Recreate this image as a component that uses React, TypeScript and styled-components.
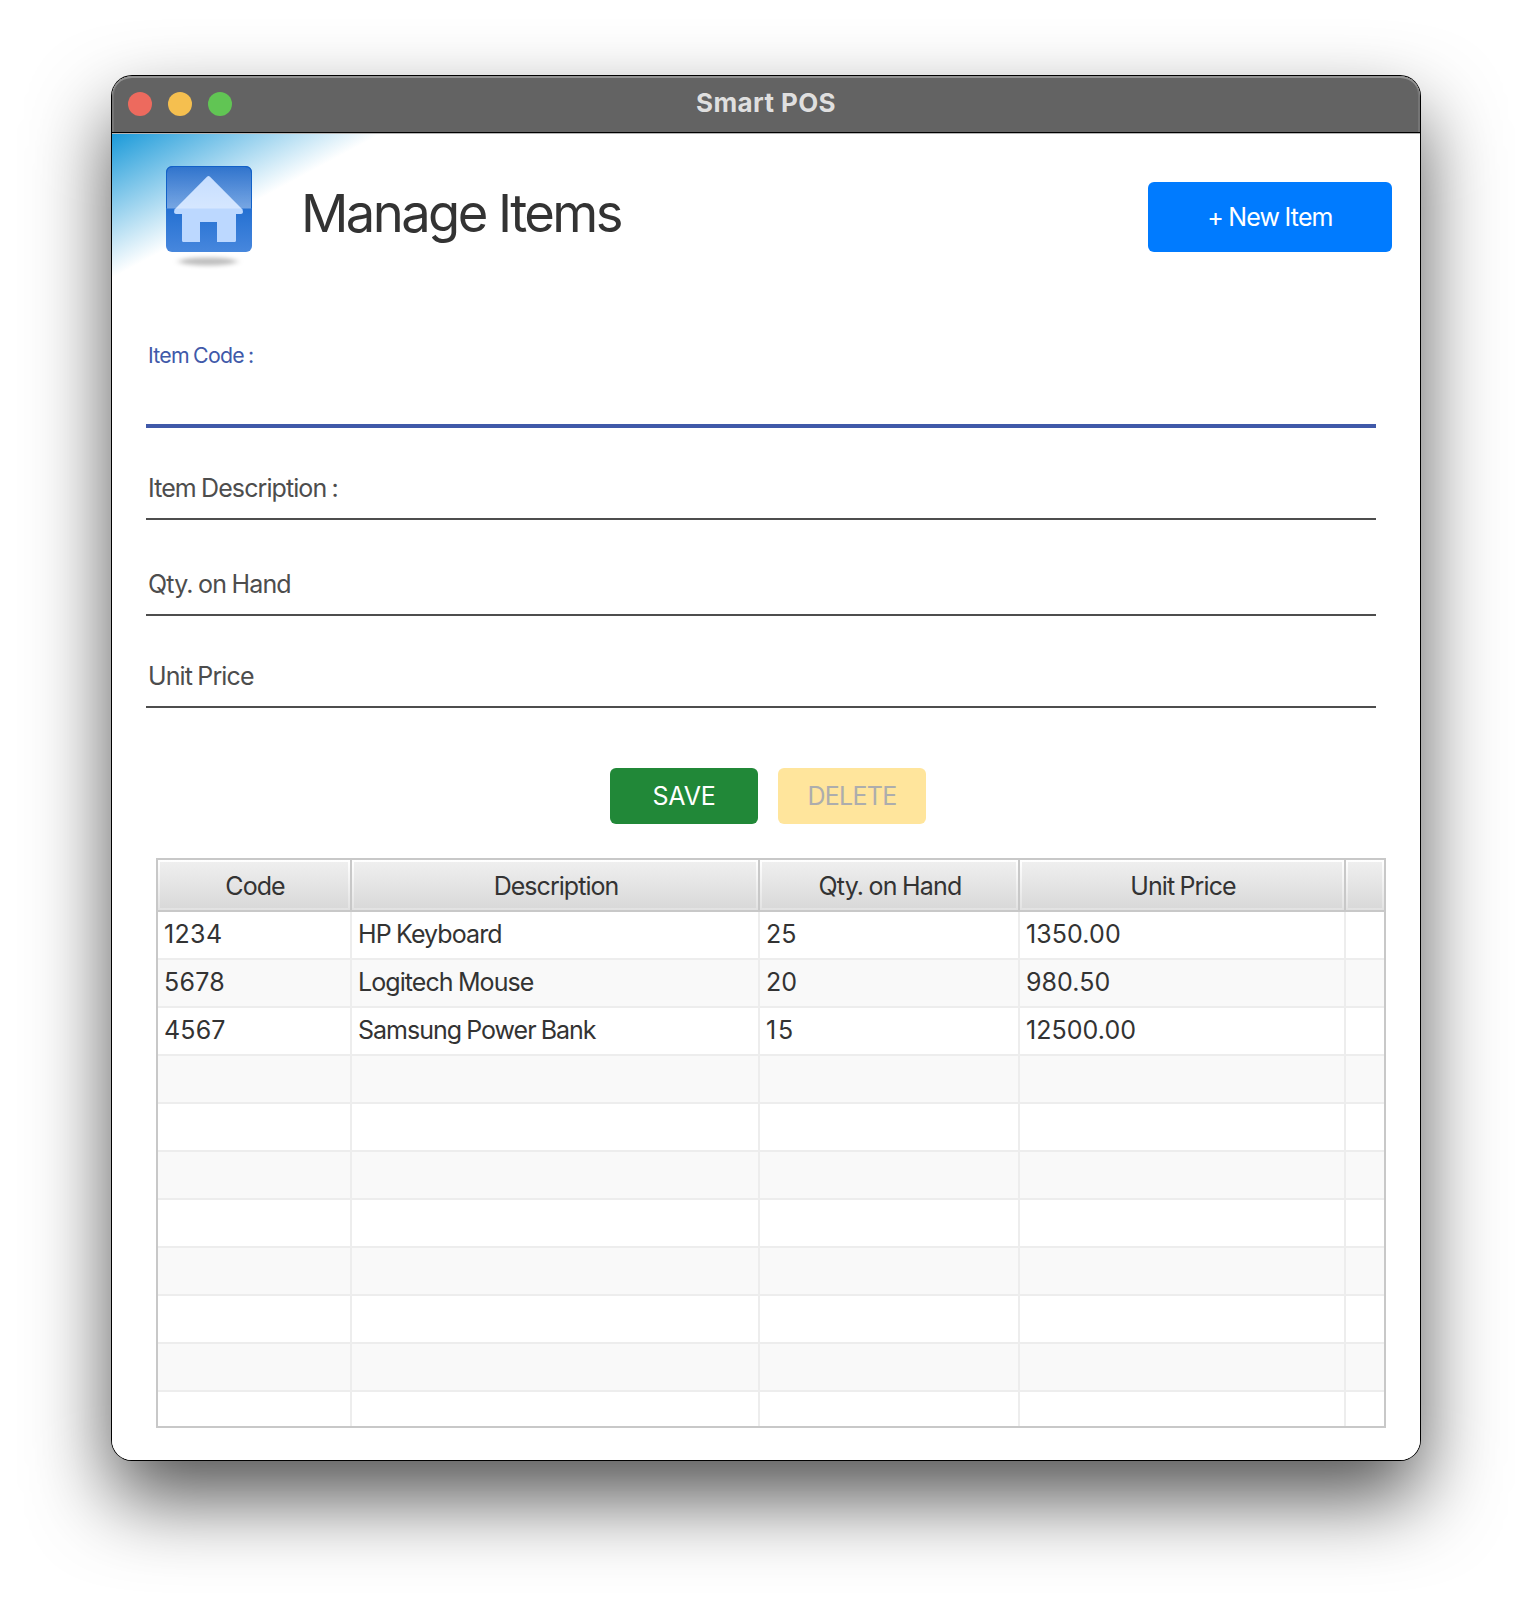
import React from "react";
import styled, { createGlobalStyle } from "styled-components";

const GlobalStyle = createGlobalStyle`
  *, *::before, *::after { box-sizing: border-box; }
  html, body { margin: 0; padding: 0; background: #fff; }
  body { font-family: Inter, "Liberation Sans", sans-serif; color: #333; overflow: hidden; }
`;

const Desktop = styled.main`
  width: 1532px;
  height: 1608px;
  padding: 76px 112px 0;
  overflow: hidden;
`;

const Window = styled.section`
  display: flex;
  flex-direction: column;
  height: 1384px;
  border-radius: 20px;
  background: #fff;
  overflow: hidden;
  box-shadow: 0 0 0 1px #000, 0 38px 80px rgba(0, 0, 0, 0.68);
`;

const TitleBar = styled.header`
  display: grid;
  grid-template-columns: 1fr auto 1fr;
  align-items: center;
  flex: none;
  height: 57px;
  padding: 0 16px 3px;
  background: #636363;
  border-bottom: 1px solid #000;
  border-radius: 20px 20px 0 0;
  box-shadow: inset 0 2px 0 #929292, inset 2px 0 0 #757575, inset -2px 0 0 #757575;
`;

const Lights = styled.div`
  display: flex;
  gap: 16px;
  padding-top: 3px;
`;

const Light = styled.span<{ $color: string }>`
  width: 24px;
  height: 24px;
  border-radius: 50%;
  background: ${(p) => p.$color};
`;

const Title = styled.h1`
  margin: 0;
  font-size: 26px;
  line-height: 32px;
  font-weight: 700;
  color: #dfdfdf;
`;

const Body = styled.div`
  display: flex;
  flex-direction: column;
  flex: 1;
  border-top: 1px solid #b5b5b5;
  background: linear-gradient(151.8deg, #1b9ad9 0, #fff 127px);
`;

const Heading = styled.div`
  display: flex;
  align-items: flex-start;
  height: 202px;
  padding: 32px 28px 0 54px;
`;

const HomeIcon = styled.svg`
  flex: none;
  width: 86px;
  height: 104px;
`;

const PageTitle = styled.h2`
  flex: 1;
  margin: 15px 0 0 49px;
  font-size: 52.5px;
  line-height: 64px;
  font-weight: 400;
`;

const Button = styled.button<{ $bg: string; $fg: string; $w: number; $h: number }>`
  display: flex;
  align-items: center;
  justify-content: center;
  width: ${(p) => p.$w}px;
  height: ${(p) => p.$h}px;
  padding: 0;
  border: 0;
  border-radius: 6px;
  background: ${(p) => p.$bg};
  color: ${(p) => p.$fg};
  font-family: inherit;
  font-size: 25px;
  line-height: 30px;
  word-spacing: -0.9px;
`;

const NewItemSlot = styled.div`
  padding-top: 16px;
`;

const Form = styled.form`
  display: flex;
  flex-direction: column;
  padding: 0 44px 0 34px;
`;

const Field = styled.label<{ $h: number; $active?: boolean }>`
  display: flex;
  flex-direction: column;
  justify-content: flex-end;
  height: ${(p) => p.$h}px;
  padding: 0 2px ${(p) => (p.$active ? 54 : 15)}px;
  border-bottom: ${(p) => (p.$active ? "4px solid #4059a9" : "2px solid #4d4d4d")};
  color: ${(p) => (p.$active ? "#4059a9" : "#4d4d4d")};
  font-size: ${(p) => (p.$active ? 21.3 : 25)}px;
  line-height: 30px;
  word-spacing: -0.9px;
`;

const Actions = styled.div`
  display: flex;
  justify-content: center;
  gap: 20px;
  padding: 60px 0 0 4px;
`;

const Table = styled.div`
  display: flex;
  flex-direction: column;
  height: 570px;
  margin: 34px 34px 0 44px;
  border: 2px solid #c8c8c8;
  overflow: hidden;
  font-size: 25px;
  line-height: 30px;
  word-spacing: -0.9px;
`;

const Row = styled.div<{ $odd?: boolean; $h: number }>`
  display: grid;
  grid-template-columns: 194px 408px 260px 326px 1fr;
  flex: none;
  height: ${(p) => p.$h}px;
  background: ${(p) => (p.$odd ? "#f9f9f9" : "#fff")};
`;

const Cell = styled.div`
  padding: 7px 0 0 6px;
  border-right: 2px solid #ededed;
  border-bottom: 2px solid #ededed;
  white-space: nowrap;
  &:last-child { border-right: 0; }
`;

const HeadCell = styled.div`
  padding: 2px;
  text-align: center;
  border: solid #c8c8c8;
  border-width: 0 2px 2px 0;
  background: linear-gradient(#fff, #e2e2e2) padding-box;
  &:last-child { border-right: 0; }
`;

const HeadFace = styled.div`
  height: 46px;
  padding: 9px 0 0 2px;
  background: linear-gradient(#efefef, #d9d9d9);
`;

const Text = styled.span<{ $ls?: number }>`
  letter-spacing: ${(p) => p.$ls ?? 0}px;
  white-space: nowrap;
`;

const columns: [string, number][] = [
  ["Code", -0.95],
  ["Description", -0.96],
  ["Qty. on Hand", -0.82],
  ["Unit Price", -0.88],
  ["", 0],
];

const items: [string, number][][] = [
  [["1234", 0.35], ["HP Keyboard", -0.9], ["25", 0.1], ["1350.00", 0.1]],
  [["5678", 0.25], ["Logitech Mouse", -0.92], ["20", 0.1], ["980.50", 0.05]],
  [["4567", 0.15], ["Samsung Power Bank", -1], ["15", 1.8], ["12500.00", 0.05]],
];

const ROWS = 11;

function Home() {
  return (
    <HomeIcon viewBox="0 0 86 104">
      <defs>
        <linearGradient id="base" x1="0" y1="0" x2="0" y2="1">
          <stop offset="0" stopColor="#1f68c8" />
          <stop offset="0.5" stopColor="#2470d2" />
          <stop offset="1" stopColor="#4787dd" />
        </linearGradient>
        <linearGradient id="gloss" x1="0" y1="0" x2="0" y2="1">
          <stop offset="0" stopColor="#fff" stopOpacity="0.08" />
          <stop offset="1" stopColor="#fff" stopOpacity="0.38" />
        </linearGradient>
        <filter id="soft" x="-30%" y="-150%" width="160%" height="400%">
          <feGaussianBlur stdDeviation="3.5 2" />
        </filter>
      </defs>
      <ellipse cx="42" cy="95.5" rx="29" ry="4" fill="#000" fillOpacity="0.25" filter="url(#soft)" />
      <rect x="0" y="0" width="86" height="86" rx="6" fill="url(#base)" />
      <path d="M16 44H70V74.500Q70 76 68.500 76H51V56H34V76H17.500Q16 76 16 74.500Z" fill="#bcd8ff" />
      <path d="M41 10.700Q42.500 9.500 44 10.700L76.500 43.500Q78 48 74.500 48H10.500Q7 48 8.500 43.500Z" fill="#bcd8ff" />
      <path d="M1 42.500V7Q1 1 7 1H79Q85 1 85 7V42.500Z" fill="url(#gloss)" />
      <path d="M0.500 42V7Q0.500 0.500 7 0.500H79Q85.500 0.500 85.500 7V42" fill="none" stroke="#1261c8" />
    </HomeIcon>
  );
}

export default function App() {
  return (
    <Desktop>
      <GlobalStyle />
      <Window>
        <TitleBar>
          <Lights>
            <Light $color="#ed6a5e" />
            <Light $color="#f5bf4f" />
            <Light $color="#61c554" />
          </Lights>
          <Title><Text $ls={0.38}>Smart POS</Text></Title>
        </TitleBar>
        <Body>
          <Heading>
            <Home />
            <PageTitle><Text $ls={-2.58}>Manage Items</Text></PageTitle>
            <NewItemSlot>
              <Button $bg="#007bff" $fg="#fff" $w={244} $h={70}><Text $ls={-0.83}>+ New Item</Text></Button>
            </NewItemSlot>
          </Heading>
          <Form>
            <Field $h={92} $active><Text $ls={-0.77}>Item Code :</Text></Field>
            <Field $h={92}><Text $ls={-0.91}>Item Description :</Text></Field>
            <Field $h={96}><Text $ls={-0.82}>Qty. on Hand</Text></Field>
            <Field $h={92}><Text $ls={-0.88}>Unit Price</Text></Field>
          </Form>
          <Actions>
            <Button $bg="#218838" $fg="#fff" $w={148} $h={56}><Text $ls={-0.2}>SAVE</Text></Button>
            <Button $bg="#ffe59c" $fg="#adadad" $w={148} $h={56}><Text $ls={-0.75}>DELETE</Text></Button>
          </Actions>
          <Table>
            <Row $h={52}>
              {columns.map(([label, ls], i) => (
                <HeadCell key={i}><HeadFace><Text $ls={ls}>{label}</Text></HeadFace></HeadCell>
              ))}
            </Row>
            {Array.from({ length: ROWS }, (_, r) => (
              <Row key={r} $odd={r % 2 === 1} $h={48}>
                {columns.map((_, c) => {
                  const v = items[r]?.[c];
                  return <Cell key={c}>{v && <Text $ls={v[1]}>{v[0]}</Text>}</Cell>;
                })}
              </Row>
            ))}
          </Table>
        </Body>
      </Window>
    </Desktop>
  );
}
